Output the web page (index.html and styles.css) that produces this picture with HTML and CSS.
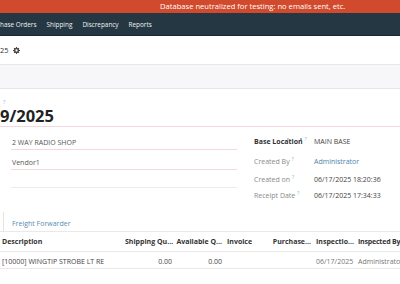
FILE: index.html
```html
<!DOCTYPE html>
<html lang="en">
<head>
    <meta charset="UTF-8">
    <meta name="viewport" content="width=device-width, initial-scale=1.0">
    <title>Receipt</title>
    <link rel="stylesheet" href="styles.css">
</head>
<body>

    <div class="banner">Database neutralized for testing: no emails sent, etc.</div>

    <nav class="menu">
        <span class="menu-item">hase Orders</span>
        <span class="menu-item">Shipping</span>
        <span class="menu-item">Discrepancy</span>
        <span class="menu-item">Reports</span>
    </nav>

    <div class="control-panel">
        <span>25</span>
        <svg class="gear" width="7" height="7" viewBox="0 0 16 16">
            <path fill="#444" d="M7 0h2l.4 2.2 1.6.7 1.9-1.3 1.4 1.4-1.3 1.9.7 1.6L16 7v2l-2.2.4-.7 1.6 1.3 1.9-1.4 1.4-1.9-1.3-1.6.7L9 16H7l-.4-2.2-1.6-.7-1.9 1.3-1.4-1.4 1.3-1.9-.7-1.6L0 9V7l2.2-.4.7-1.6-1.3-1.9 1.4-1.4 1.9 1.3 1.6-.7z"/>
            <circle cx="8" cy="8" r="2.6" fill="#fff"/>
        </svg>
    </div>

    <div class="statusbar"></div>

    <div class="sheet">
        <sup class="help title-help">?</sup>
        <div class="title">9/2025</div>
        <div class="marks"><span class="mark-gray"></span><span class="mark-blue"></span></div>

        <div class="groups">
            <div class="group-left">
                <div class="field">2 WAY RADIO SHOP</div>
                <div class="field">Vendor1</div>
                <div class="field empty"></div>
            </div>
            <div class="group-right">
                <div class="label strong">Base Location <sup class="help">?</sup></div>
                <div class="value upper">MAIN BASE</div>
                <div class="label">Created By <sup class="help">?</sup></div>
                <div class="value link">Administrator</div>
                <div class="label">Created on <sup class="help">?</sup></div>
                <div class="value">06/17/2025 18:20:36</div>
                <div class="label">Receipt Date <sup class="help">?</sup></div>
                <div class="value">06/17/2025 17:34:33</div>
            </div>
        </div>

        <div class="tabs">
            <span class="tab">Freight Forwarder</span>
        </div>

        <div class="table">
            <div class="row head">
                <div class="cell">Description</div>
                <div class="cell num">Shipping Qu...</div>
                <div class="cell num">Available Q...</div>
                <div class="cell">Invoice</div>
                <div class="cell num">Purchase...</div>
                <div class="cell">Inspectio...</div>
                <div class="cell">Inspected By</div>
            </div>
            <div class="row">
                <div class="cell">[10000] WINGTIP STROBE LT RE</div>
                <div class="cell num">0.00</div>
                <div class="cell num">0.00</div>
                <div class="cell"></div>
                <div class="cell"></div>
                <div class="cell muted">06/17/2025</div>
                <div class="cell muted">Administrato</div>
            </div>
        </div>
    </div>

</body>
</html>
```

FILE: styles.css
```css
body {
    margin: 0;
    font-family: "Open Sans", "Noto Sans", sans-serif;
    font-size: 7px;
    color: #444;
    background-color: #fff;
    overflow: hidden;
}

.banner {
    height: 13px;
    line-height: 13px;
    background-color: #d24a2d;
    color: #fff;
    font-size: 7.6px;
    padding-left: 160px;
    white-space: nowrap;
}

.menu {
    height: 22px;
    background-color: #243742;
    display: flex;
    align-items: center;
    gap: 10px;
    border-bottom: 1px solid #1a2931;
}

.menu-item {
    color: #eef1f3;
    font-size: 6.4px;
}

.control-panel {
    height: 28px;
    display: flex;
    align-items: center;
    gap: 5px;
    color: #333;
    font-size: 7.4px;
}

.gear {
    display: block;
}

.statusbar {
    height: 23px;
    background-color: #f7f7f9;
    border-top: 1px solid #e8e8eb;
    border-bottom: 1px solid #e6e6e9;
}

.sheet {
    padding-top: 9px;
}

.help {
    color: #7ab8d4;
    font-size: 5px;
    font-weight: normal;
}

.title-help {
    display: block;
    margin-left: 3px;
    height: 8px;
    line-height: 8px;
}

.title {
    font-size: 16.5px;
    font-weight: bold;
    color: #222;
    line-height: 19px;
    padding-bottom: 1px;
    border-bottom: 1px solid #f4d7dd;
}

.marks {
    height: 0;
    display: flex;
    gap: 11px;
    padding-left: 287px;
    transform: translateY(11px);
}

.mark-gray,
.mark-blue {
    width: 2px;
    height: 2px;
}

.mark-gray {
    background-color: #ccc;
}

.mark-blue {
    background-color: #7ab8d4;
}

.groups {
    display: flex;
    margin-top: 3px;
}

.group-left {
    width: 226px;
    margin-left: 11px;
}

.field {
    height: 13px;
    line-height: 13px;
    padding-top: 6px;
    padding-left: 1px;
    border-bottom: 1px solid #f2d9de;
    color: #555;
}

.field.empty {
    height: 11px;
    border-bottom-color: #ececec;
}

.group-right {
    margin-left: 17px;
    display: grid;
    grid-template-columns: 60px auto;
    grid-template-rows: 23px 17px 18px 15px;
    align-items: center;
}

.label {
    color: #8a8a8a;
}

.label.strong {
    color: #333;
    font-weight: bold;
}

.value {
    color: #444;
}

.value.link {
    color: #4c84a8;
}

.tabs {
    margin-top: 9px;
    height: 19px;
    border-bottom: 1px solid #e9e9e9;
}

.tab {
    display: inline-block;
    height: 14px;
    line-height: 14px;
    padding-top: 5px;
    margin-left: 3px;
    padding-left: 8px;
    padding-right: 14px;
    border-left: 1px solid #e4e4e4;
    color: #5b8cae;
}

.row {
    display: grid;
    grid-template-columns: 125px 50px 50px 47px 42px 42px 44px;
    height: 14px;
    padding-top: 2px;
    align-items: center;
    border-bottom: 1px solid #e9e9e9;
    white-space: nowrap;
}

.row.head {
    height: 19px;
    padding-top: 0;
    font-weight: bold;
    color: #333;
}

.row.head .cell:last-child {
    letter-spacing: -0.2px;
}

.cell {
    padding-left: 2px;
    overflow: hidden;
}

.cell.num {
    text-align: right;
    padding-right: 3px;
    padding-left: 0;
}

.cell.muted {
    color: #777;
}
```
